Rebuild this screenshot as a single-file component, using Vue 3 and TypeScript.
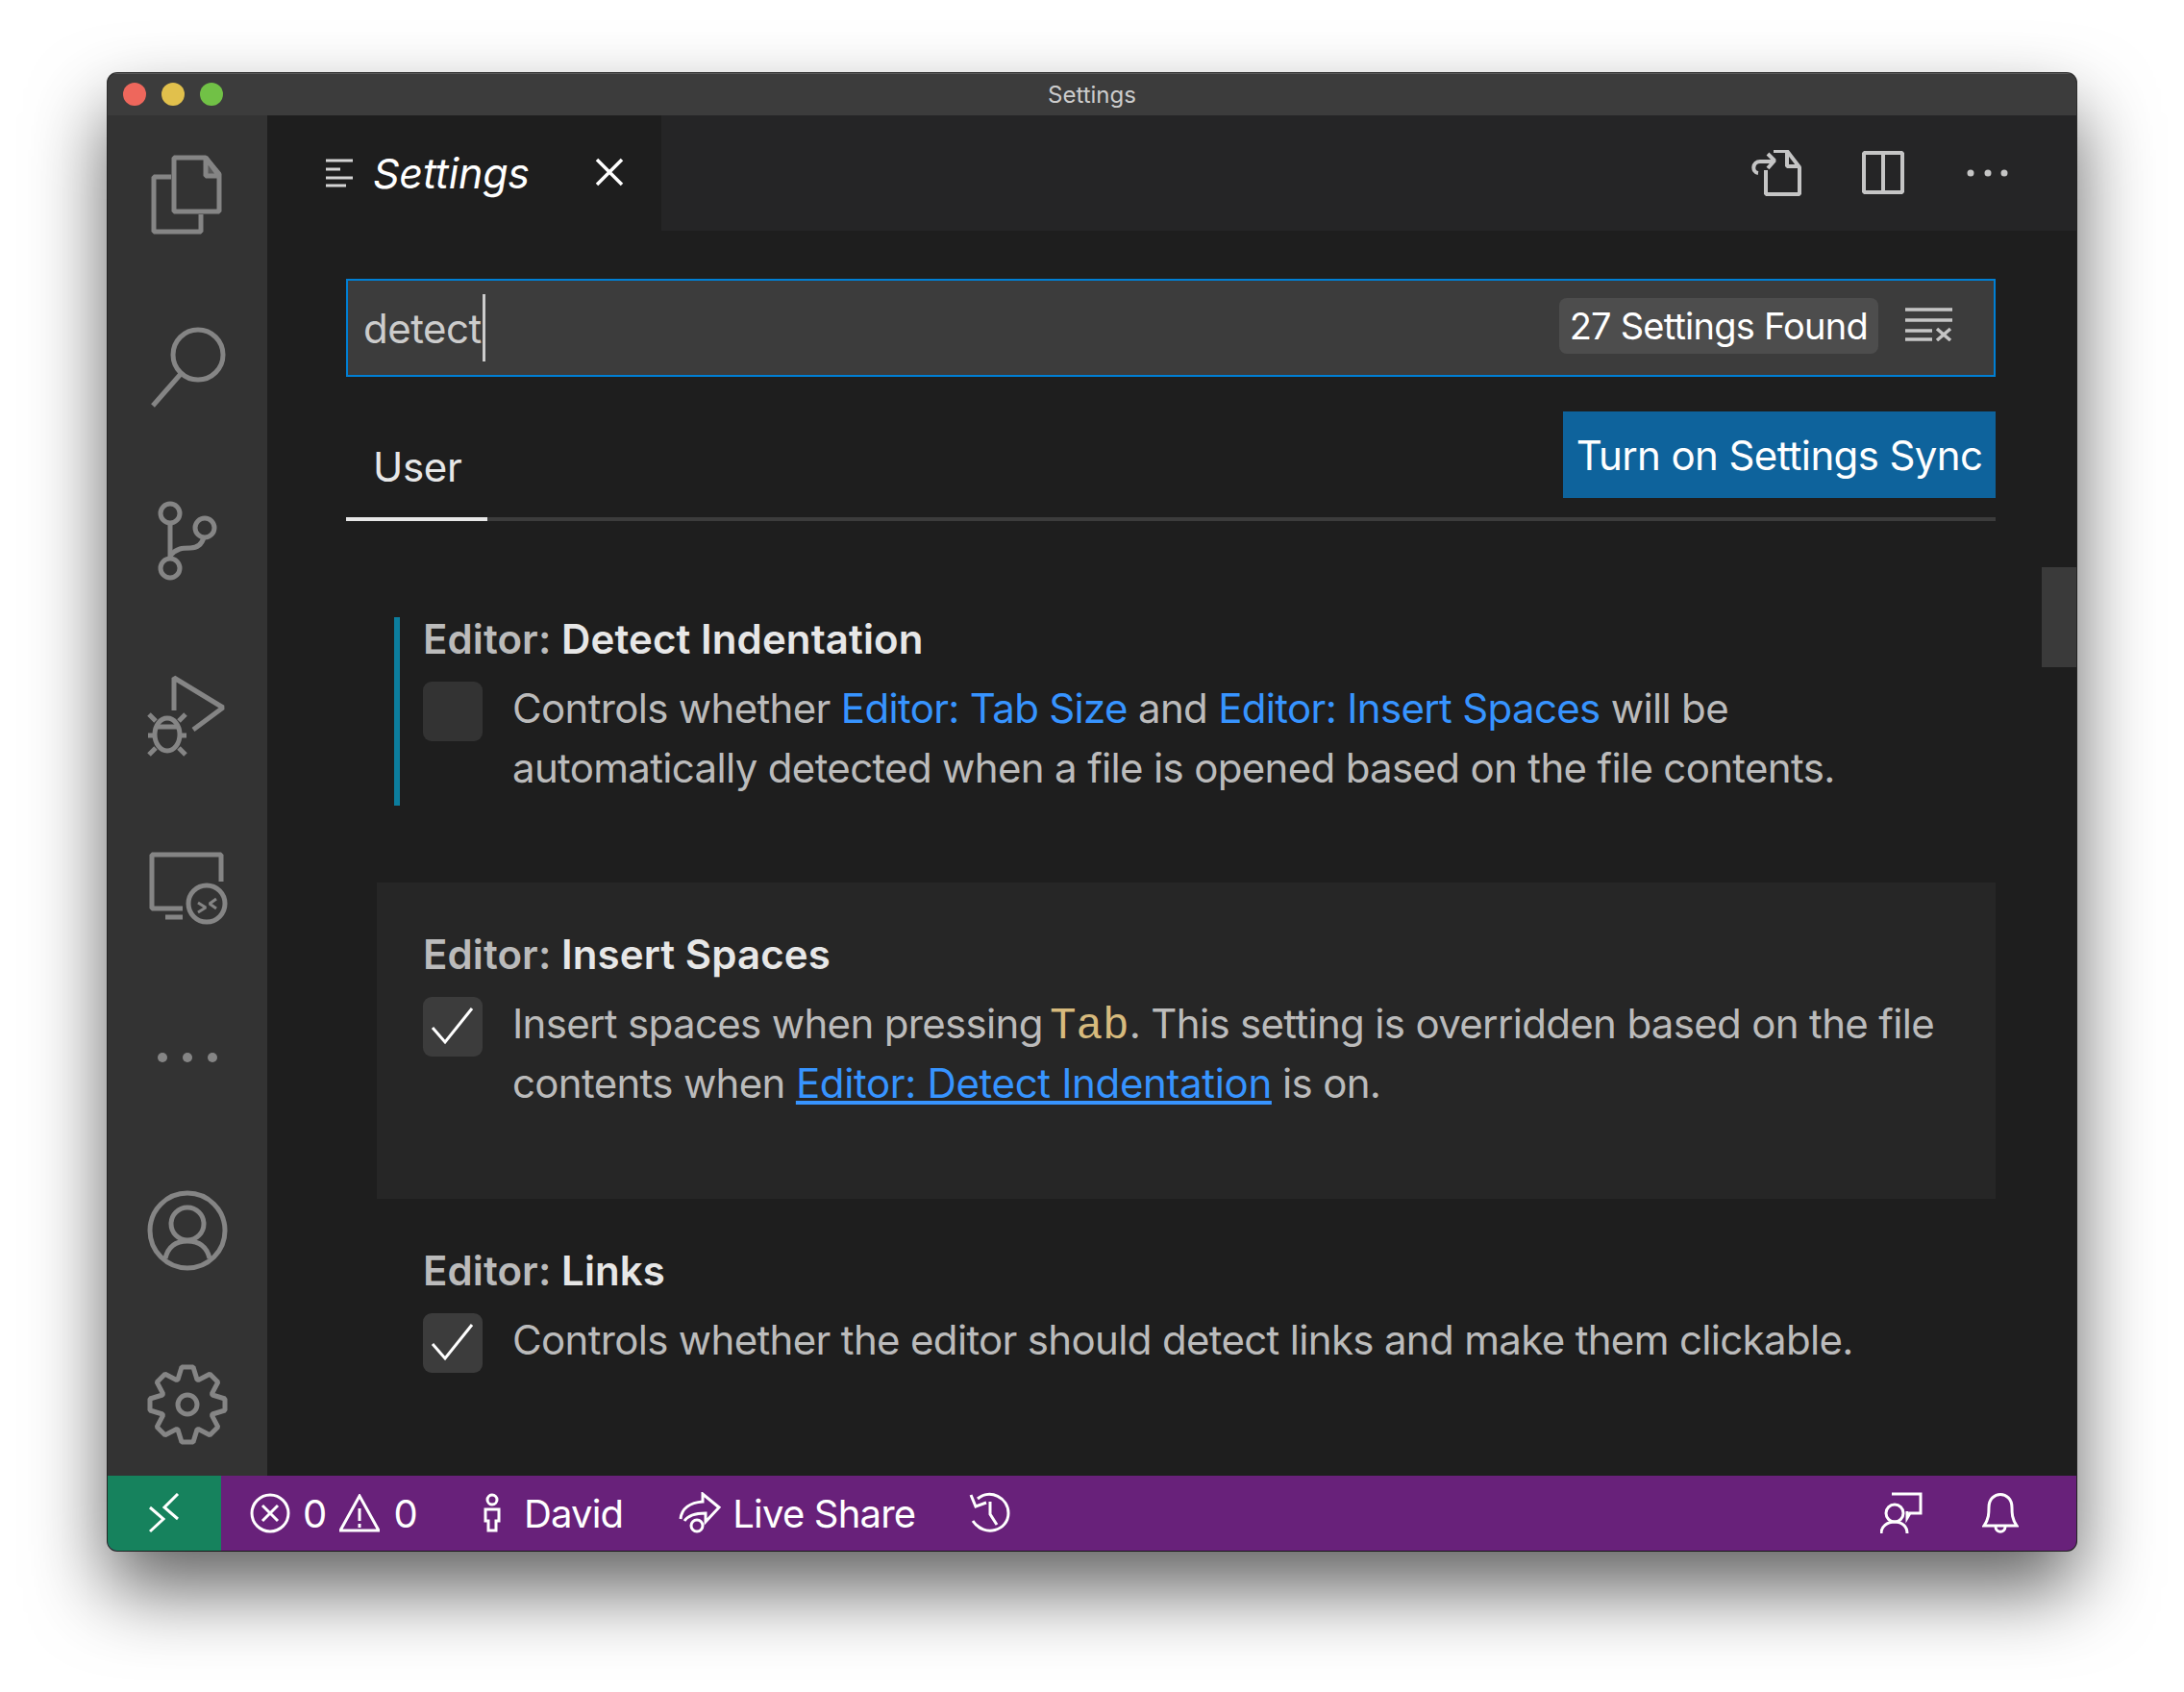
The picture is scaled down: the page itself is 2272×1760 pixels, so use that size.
<script setup lang="ts">
  // eight teeth around the centre of the activity bar cog
  const gearPath = (cx: number, cy: number): string => {
    const tooth = [
      [-10, -26],
      [-6, -39],
      [6, -39],
      [10, -26],
    ]
    const points: string[] = []
    for (let i = 0; i < 8; i++) {
      const a = (i * Math.PI) / 4
      for (const [x, y] of tooth) {
        const px = cx + x * Math.cos(a) - y * Math.sin(a)
        const py = cy + x * Math.sin(a) + y * Math.cos(a)
        points.push(`${px.toFixed(1)} ${py.toFixed(1)}`)
      }
    }
    return `M${points.join(' L')} Z`
  }

  const gear = gearPath(195, 1461)
</script>

<template>
  <div class="page">
    <div class="window">
      <div class="titlebar">
        <div class="lights">
          <span class="light red"></span>
          <span class="light yellow"></span>
          <span class="light green"></span>
        </div>
        <span class="title">Settings</span>
      </div>

      <div class="body">
        <nav class="activity">
          <svg class="act" viewBox="112 120 166 180">
            <path d="M178 184 H160 V241 H209 V223" />
            <path d="M181 164 H214 L228 181 V220 H181 Z" />
            <path class="fold" d="M214 164 V183 H228 Z" />
          </svg>
          <svg class="act" viewBox="112 300 166 180">
            <circle cx="206" cy="369" r="26" />
            <path d="M188 389 L159 422" />
          </svg>
          <svg class="act" viewBox="112 480 166 180">
            <circle cx="177" cy="534" r="10" />
            <circle cx="213" cy="549" r="10" />
            <circle cx="177" cy="591" r="10" />
            <path d="M177 544 V581" />
            <path d="M177 578 C184 570 190 570 198 570 C206 570 210 566 212 559" />
          </svg>
          <svg class="act" viewBox="112 660 166 180">
            <path d="M181 739 V705 L232 736 L201 759" />
            <ellipse cx="174" cy="764" rx="13" ry="17" />
            <path d="M162 750 L155 743 M186 750 L193 743 M154 765 H161 M187 765 H194 M162 778 L155 785 M186 778 L193 785 M162 756 H186" />
          </svg>
          <svg class="act" viewBox="112 840 166 180">
            <path d="M230 917 V889 H158 V945 H190 M172 954 H190" />
            <circle cx="215" cy="940" r="19" />
            <path class="thin" d="M206 939 L214 944 L206 949 M225 935 L218 940 L225 945" />
          </svg>
          <svg class="act" viewBox="112 1020 166 180">
            <circle class="fill" cx="169" cy="1100" r="5" />
            <circle class="fill" cx="195" cy="1100" r="5" />
            <circle class="fill" cx="221" cy="1100" r="5" />
          </svg>
          <svg class="act" viewBox="112 1200 166 180">
            <circle cx="195" cy="1280" r="39" />
            <circle cx="195" cy="1273" r="17" />
            <path d="M172 1309 C175 1296 184 1291 195 1291 C206 1291 215 1296 218 1309" />
          </svg>
          <svg class="act last" viewBox="112 1380 166 155">
            <path :d="gear" />
            <circle cx="195" cy="1461" r="10" />
          </svg>
        </nav>

        <main class="editor">
          <div class="tabbar">
            <div class="tab">
              <svg class="tab-icon" viewBox="0 0 28 30">
                <path d="M0 2 H28 M0 11 H15 M0 20 H28 M0 28 H21" />
              </svg>
              <span class="tab-label">Settings</span>
              <svg class="tab-close" viewBox="0 0 30 30">
                <path d="M2 2 L28 28 M28 2 L2 28" />
              </svg>
            </div>
            <div class="actions">
              <svg class="action" width="52" height="48" viewBox="1823 157 52 48">
                <path d="M1838 178 V203 H1873 V175 L1860 158 H1846 M1860 158 V174 H1873" />
                <path d="M1845 169 H1832 C1824 169 1823 180 1830 181 M1840 161 L1847 168 L1840 176" />
              </svg>
              <svg class="action" width="45" height="46" viewBox="1937 156 45 46">
                <path d="M1940 158 H1980 V199 H1940 Z M1960 158 V199" />
              </svg>
              <svg class="action" width="49" height="10" viewBox="2043 175 49 10">
                <circle class="dot" cx="2050" cy="180" r="3.5" />
                <circle class="dot" cx="2068" cy="180" r="3.5" />
                <circle class="dot" cx="2085" cy="180" r="3.5" />
              </svg>
            </div>
          </div>

          <div class="content">
            <div class="search">
              <span class="query">detect</span><span class="caret"></span>
              <span class="found">27 Settings Found</span>
              <svg class="clear" viewBox="0 0 49 35">
                <path d="M0 2 H49 M0 13 H49 M0 24 H28 M0 33 H28" />
                <path d="M33 22 L47 34 M47 22 L33 34" />
              </svg>
            </div>

            <div class="scope">
              <div class="scope-tab">User</div>
              <button class="sync">Turn on Settings Sync</button>
            </div>

            <div class="setting">
              <div class="setting-inner focused">
                <div class="setting-title"><span class="cat">Editor: </span>Detect Indentation</div>
                <div class="setting-row">
                  <span class="check off"></span>
                  <p class="desc">
                    Controls whether <a class="link">Editor: Tab Size</a> and
                    <a class="link">Editor: Insert Spaces</a> will be automatically detected when a file is
                    opened based on the file contents.
                  </p>
                </div>
              </div>
            </div>

            <div class="setting hover">
              <div class="setting-inner">
                <div class="setting-title"><span class="cat">Editor: </span>Insert Spaces</div>
                <div class="setting-row">
                  <span class="check">
                    <svg viewBox="0 0 62 62"><path d="M10 32 L23 47 L51 12" /></svg>
                  </span>
                  <p class="desc">
                    Insert spaces when pressing <code class="code">Tab</code>. This setting is overridden
                    based on the file contents when
                    <a class="link under">Editor: Detect Indentation</a> is on.
                  </p>
                </div>
              </div>
            </div>

            <div class="setting">
              <div class="setting-inner">
                <div class="setting-title"><span class="cat">Editor: </span>Links</div>
                <div class="setting-row">
                  <span class="check">
                    <svg viewBox="0 0 62 62"><path d="M10 32 L23 47 L51 12" /></svg>
                  </span>
                  <p class="desc">Controls whether the editor should detect links and make them clickable.</p>
                </div>
              </div>
            </div>
          </div>

          <div class="scrollbar"></div>
        </main>
      </div>

      <footer class="status">
        <div class="remote">
          <svg width="32" height="42" viewBox="155 1551 32 42">
            <path d="M156 1566 L170 1578 L156 1591 M185 1552 L171 1566 L185 1578" />
          </svg>
        </div>
        <svg class="st-icon first" width="42" height="42" viewBox="260 1551 42 42">
          <circle cx="281" cy="1572" r="19" />
          <path d="M273 1564 L289 1580 M289 1564 L273 1580" />
        </svg>
        <span class="st-text tight">0</span>
        <svg class="st-icon warn" width="42" height="40" viewBox="353 1551 42 40">
          <path d="M374 1553 L394 1589 H354 Z" />
          <path d="M374 1566 V1579 M374 1582 V1586" />
        </svg>
        <span class="st-text warn-count">0</span>
        <svg class="st-icon person" width="22" height="42" viewBox="503 1551 22 42">
          <circle cx="514" cy="1558" r="5" />
          <path d="M507 1568 H521 V1580 H518 V1590 H510 V1580 H507 Z" />
        </svg>
        <span class="st-text david">David</span>
        <svg class="st-icon share" width="46" height="44" viewBox="707 1550 46 44">
          <path d="M710 1578 C711 1567 720 1561 733 1560 V1552 L750 1566 L736 1581 V1572 C726 1572 718 1574 714 1580" />
          <circle cx="727" cy="1585" r="6" />
        </svg>
        <span class="st-text live">Live Share</span>
        <svg class="st-icon history" width="44" height="44" viewBox="1008 1550 44 44">
          <path d="M1017 1557 C1030 1546 1049 1556 1049 1572 C1049 1590 1024 1598 1012 1580" />
          <path d="M1010 1553 L1015 1565 L1026 1561 M1030 1560 V1573 L1037 1584" />
        </svg>
        <div class="status-right">
          <svg class="st-icon" width="44" height="44" viewBox="1957 1550 44 44">
            <path d="M1969 1552 H1999 V1572 H1988 L1985 1577 V1570" />
            <circle cx="1972" cy="1572" r="9" />
            <path d="M1958 1593 C1958 1586 1964 1581 1972 1581 C1980 1581 1985 1586 1985 1593" />
          </svg>
          <svg class="st-icon" width="38" height="44" viewBox="2063 1550 38 44">
            <path d="M2065 1585 C2070 1578 2070 1572 2070 1566 C2070 1548 2094 1548 2094 1566 C2094 1572 2094 1578 2099 1585 Z" />
            <path d="M2077 1586 C2077 1593 2087 1593 2087 1586" />
          </svg>
        </div>
      </footer>
    </div>
  </div>
</template>

<style>
  html,
  body {
    margin: 0;
    background: #ffffff;
  }
</style>

<style scoped>
  .page {
    width: 2272px;
    height: 1760px;
    box-sizing: border-box;
    padding: 76px 0 0 112px;
    overflow: hidden;
  }

  .window {
    position: relative;
    width: 2048px;
    height: 1537px;
    display: flex;
    flex-direction: column;
    border-radius: 10px;
    overflow: hidden;
    background: #1e1e1e;
    font-family: Inter, 'Liberation Sans', sans-serif;
    box-shadow: 0 0 0 1px rgba(0, 0, 0, 0.8), 0 40px 80px rgba(0, 0, 0, 0.62);
  }

  .titlebar {
    position: relative;
    flex: 0 0 44px;
    display: flex;
    align-items: center;
    justify-content: center;
    background: #3c3c3c;
    border-top: 1px solid #5a5a5a;
    box-sizing: border-box;
  }

  .lights {
    position: absolute;
    left: 16px;
    top: 9px;
    display: flex;
    gap: 16px;
  }

  .light {
    width: 24px;
    height: 24px;
    border-radius: 50%;
  }

  .red {
    background: #ee675c;
  }

  .yellow {
    background: #e1c04c;
  }

  .green {
    background: #71c146;
  }

  .title {
    font-size: 24px;
    color: #cccccc;
  }

  .body {
    flex: 1;
    display: flex;
    min-height: 0;
  }

  .activity {
    flex: 0 0 166px;
    display: flex;
    flex-direction: column;
    background: #333333;
  }

  .act {
    display: block;
    flex: 0 0 180px;
    width: 166px;
    height: 180px;
    fill: none;
    stroke: #858585;
    stroke-width: 5;
    stroke-linejoin: bevel;
  }

  .act.last {
    flex-basis: 155px;
    height: 155px;
  }

  .act .thin {
    stroke-width: 3;
  }

  .act .fold {
    fill: #5a5a5a;
  }

  .act .fill {
    fill: #858585;
    stroke: none;
  }

  .editor {
    position: relative;
    flex: 1;
    min-width: 0;
    display: flex;
    flex-direction: column;
    overflow: hidden;
  }

  .tabbar {
    flex: 0 0 120px;
    display: flex;
    justify-content: space-between;
    background: #252526;
  }

  .tab {
    width: 410px;
    display: flex;
    align-items: center;
    background: #1e1e1e;
    padding-left: 61px;
    box-sizing: border-box;
  }

  .tab-icon {
    width: 28px;
    height: 30px;
    fill: none;
    stroke: #d4d4d4;
    stroke-width: 3;
  }

  .tab-label {
    margin-left: 21px;
    width: 231px;
    font-size: 43px;
    font-style: italic;
    letter-spacing: -0.2px;
    color: #ffffff;
  }

  .tab-close {
    width: 30px;
    height: 30px;
    margin-top: -3px;
    fill: none;
    stroke: #ffffff;
    stroke-width: 3.5;
  }

  .actions {
    display: flex;
    align-items: center;
    gap: 62px;
    padding-right: 68px;
  }

  .action {
    fill: none;
    stroke: #c5c5c5;
    stroke-width: 4;
    stroke-linejoin: bevel;
  }

  .action .dot {
    fill: #c5c5c5;
    stroke: none;
  }

  .content {
    flex: 1;
    min-height: 0;
    padding: 50px 84px 0 82px;
  }

  .search {
    height: 102px;
    display: flex;
    align-items: center;
    background: #3c3c3c;
    border: 2px solid #007fd4;
    box-sizing: border-box;
    padding: 0 43px 0 16px;
  }

  .query {
    font-size: 42px;
    letter-spacing: -0.5px;
    color: #cccccc;
  }

  .caret {
    width: 3px;
    height: 70px;
    margin-left: 1px;
    background: #cccccc;
  }

  .found {
    margin: -4px 0 0 auto;
    height: 58px;
    line-height: 58px;
    padding: 0 11px;
    border-radius: 8px;
    background: #4d4d4d;
    color: #ffffff;
    font-size: 38px;
    letter-spacing: -0.77px;
    white-space: nowrap;
  }

  .clear {
    width: 49px;
    height: 35px;
    margin: -8px 0 0 28px;
    fill: none;
    stroke: #c5c5c5;
    stroke-width: 3.5;
  }

  .scope {
    margin-top: 36px;
    height: 114px;
    display: flex;
    justify-content: space-between;
    border-bottom: 4px solid #3c3c3c;
    box-sizing: border-box;
  }

  .scope-tab {
    align-self: flex-end;
    height: 110px;
    width: 147px;
    margin-bottom: -4px;
    box-sizing: border-box;
    padding: 28px 0 0 28px;
    border-bottom: 4px solid #e7e7e7;
    color: #e7e7e7;
    font-size: 42px;
    letter-spacing: -0.3px;
  }

  .sync {
    height: 90px;
    width: 450px;
    padding: 0;
    border: none;
    background: #0e639c;
    color: #ffffff;
    font-family: inherit;
    font-size: 42px;
    letter-spacing: -0.62px;
    white-space: nowrap;
  }

  .setting {
    margin-left: 32px;
    height: 328px;
    box-sizing: border-box;
    padding: 52px 0 0 18px;
  }

  .setting:nth-of-type(3) {
    margin-top: 48px;
  }

  .hover {
    height: 329px;
    background: #262626;
  }

  .setting-inner {
    height: 196px;
    box-sizing: border-box;
    padding-left: 24px;
    border-left: 6px solid transparent;
  }

  .focused {
    border-left-color: #0c7d9d;
  }

  .setting-title {
    height: 46px;
    line-height: 46px;
    font-size: 42px;
    font-weight: 600;
    letter-spacing: 0.1px;
    color: #e7e7e7;
  }

  .cat {
    color: #bbbbbb;
  }

  .setting-row {
    display: flex;
    gap: 31px;
    margin-top: 18px;
  }

  .check {
    flex: 0 0 62px;
    height: 62px;
    margin-top: 3px;
    border-radius: 9px;
    background: #3c3c3c;
  }

  .check.off {
    background: #333333;
  }

  .check svg {
    display: block;
    fill: none;
    stroke: #ffffff;
    stroke-width: 3;
  }

  .desc {
    margin: 0;
    max-width: 1500px;
    font-size: 42px;
    line-height: 62.4px;
    letter-spacing: -0.67px;
    color: #bbbbbb;
  }

  .link {
    color: #3794ff;
  }

  .under {
    letter-spacing: -0.35px;
    text-decoration: underline;
  }

  .code {
    margin-left: -4px;
    font-family: 'Liberation Mono', monospace;
    font-size: 46px;
    line-height: 1;
    letter-spacing: 0;
    color: #d7ba7d;
  }

  .scrollbar {
    position: absolute;
    right: 0;
    top: 470px;
    width: 36px;
    height: 104px;
    background: #3a3a3a;
  }

  .status {
    flex: 0 0 78px;
    display: flex;
    align-items: center;
    background: #68217a;
    color: #ffffff;
    font-size: 40px;
    letter-spacing: -0.8px;
  }

  .remote {
    align-self: stretch;
    flex: 0 0 118px;
    display: flex;
    align-items: center;
    justify-content: center;
    background: #16825d;
  }

  .st-icon,
  .remote svg {
    flex: none;
    fill: none;
    stroke: #ffffff;
    stroke-width: 3;
  }

  .first {
    margin-left: 30px;
  }

  .st-text {
    white-space: nowrap;
  }

  .tight {
    margin-left: 13px;
  }

  .warn {
    margin-left: 14px;
  }

  .warn-count {
    margin-left: 14px;
  }

  .person {
    margin-left: 67px;
  }

  .david {
    margin-left: 22px;
  }

  .share {
    margin-left: 57px;
  }

  .live {
    margin-left: 11px;
  }

  .history {
    margin-left: 56px;
  }

  .status-right {
    margin-left: auto;
    display: flex;
    align-items: center;
    gap: 62px;
    padding-right: 60px;
  }
</style>
